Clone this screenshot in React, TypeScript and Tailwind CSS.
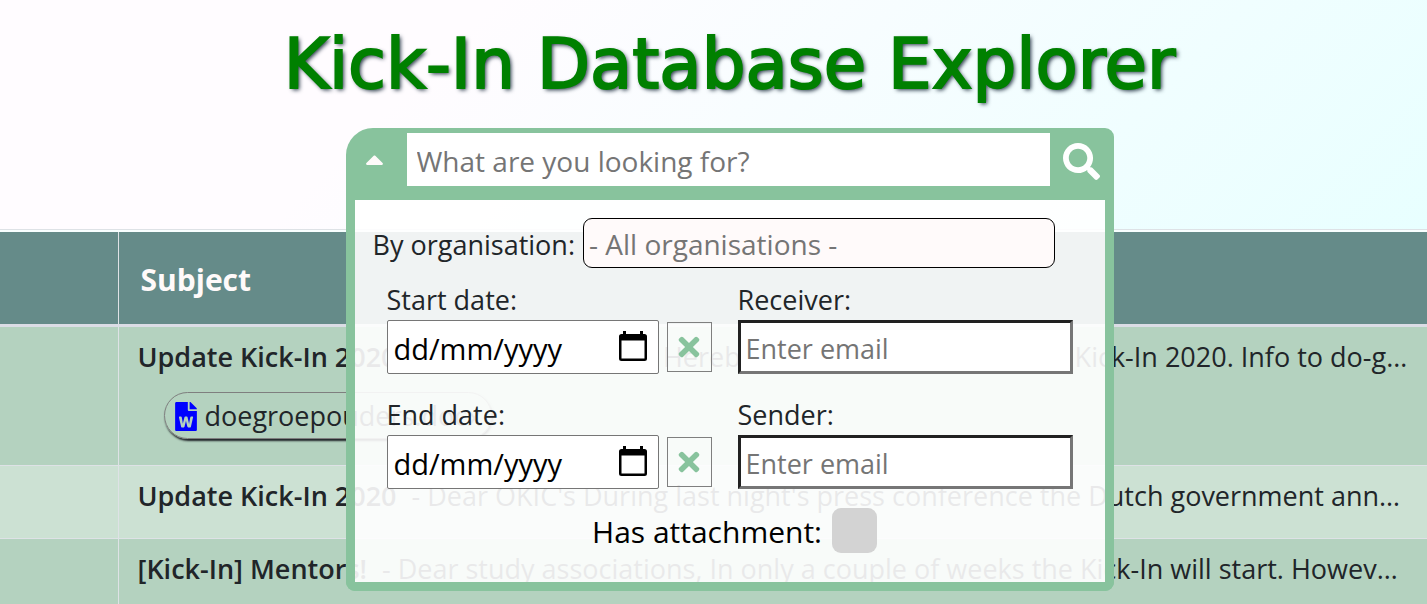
import { useState } from "react";
import { FaCaretUp, FaSearch, FaTimes, FaFileWord } from "react-icons/fa";

const uiFont = "font-['Segoe_UI','Open_Sans',sans-serif]";

type Mail = { subject: string; preview: string; attachment?: string };

const mails: Mail[] = [
  {
    subject: "Update Kick-In 2020",
    preview:
      "Dear associations, Hereby a brief update about the Kick-In 2020. Info to do-group parents",
    attachment: "doegroepouders.docx",
  },
  {
    subject: "Update Kick-In 2020",
    preview:
      "Dear OKIC's During last night's press conference the Dutch government announced new measures",
  },
  {
    subject: "[Kick-In] Mentors!",
    preview:
      "Dear study associations, In only a couple of weeks the Kick-In will start. However, we still need mentors",
  },
];

function CalendarIcon() {
  return (
    <svg viewBox="0 0 28 30" className="h-[30px] w-7" aria-hidden="true">
      <path
        fill="currentColor"
        fillRule="evenodd"
        d="M4 0h3v3h14V0h3v3h1.500a2.500 2.500 0 0 1 2.500 2.500v22a2.500 2.500 0 0 1-2.500 2.500h-23A2.500 2.500 0 0 1 0 27.500v-22A2.500 2.500 0 0 1 2.500 3H4zM2.500 9.500V27.500h23V9.500z"
      />
    </svg>
  );
}

function DateField({ id, label }: { id: string; label: string }) {
  const [value, setValue] = useState("");
  return (
    <div>
      <label htmlFor={id} className="block h-10 leading-10">
        {label}
      </label>
      <div className="flex items-center gap-2">
        <div className="flex h-[54px] min-w-0 flex-1 items-center rounded-[2px] border border-[#767676] bg-white pr-[11px] pl-1.5 text-black">
          <input
            id={id}
            type="text"
            placeholder="dd/mm/yyyy"
            value={value}
            onChange={(e) => setValue(e.target.value)}
            className="min-w-0 flex-1 bg-transparent pt-1 text-[29px] outline-none placeholder:text-black"
          />
          <button type="button" aria-label={`Pick ${label}`} className="-mt-0.5">
            <CalendarIcon />
          </button>
        </div>
        <button
          type="button"
          aria-label={`Clear ${label}`}
          onClick={() => setValue("")}
          className="flex h-[50px] w-[45px] items-center justify-center border border-[#7f7f7f] text-[#88c39d]"
        >
          <FaTimes className="size-[30px]" />
        </button>
      </div>
    </div>
  );
}

function EmailField({ id, label }: { id: string; label: string }) {
  return (
    <div>
      <label htmlFor={id} className="block h-10 leading-10">
        {label}
      </label>
      <input
        id={id}
        type="email"
        placeholder="Enter email"
        className="h-[54px] w-full border-[3px] border-t-[#212121] border-r-[#767676] border-b-[#767676] border-l-[#212121] bg-white px-[5px] pt-0.5 placeholder:text-[#757575]"
      />
    </div>
  );
}

function SearchPanel() {
  return (
    <div className="absolute inset-x-0 top-full z-10 rounded-b-[9px] border-[9px] border-t-0 border-[#88c39d] bg-white/90 bg-clip-padding px-[18px] pt-[18px] pb-[29px] text-[27px]">
      <div className="flex items-center gap-2">
        <label htmlFor="organisation" className="shrink-0 pt-1">
          By organisation:
        </label>
        <input
          id="organisation"
          type="text"
          placeholder="- All organisations -"
          className="mr-8 h-[50px] min-w-0 flex-1 rounded-[9px] border border-black bg-[#fffafa] px-[5px] pt-0.5 text-[28px] placeholder:text-[#757575]"
        />
      </div>
      <div className="mt-3 mr-[14px] ml-[14px] grid grid-cols-[325px_1fr] gap-x-[26px] gap-y-[21px]">
        <DateField id="start" label="Start date:" />
        <EmailField id="receiver" label="Receiver:" />
        <DateField id="end" label="End date:" />
        <EmailField id="sender" label="Sender:" />
      </div>
      <div className="mt-[19px] flex h-[45px] items-center justify-center gap-2.5 pl-2.5 text-[30px] text-black">
        <label htmlFor="attachment" className="pt-0.5">
          Has attachment:
        </label>
        <input
          id="attachment"
          type="checkbox"
          className="size-[45px] appearance-none rounded-[9px] bg-[#d3d3d3] checked:bg-[#88c39d]"
        />
      </div>
    </div>
  );
}

export default function App() {
  const [open, setOpen] = useState(true);
  return (
    <main
      className={`min-h-screen overflow-hidden text-[27px] text-[#212529] ${uiFont}`}
    >
      <header className="h-[229px] bg-linear-[135deg,#fffcff_30%,#e8ffff] pl-8">
        <h1 className="h-32 text-center font-['Comic_Sans_MS','DejaVu_Sans',sans-serif] text-[69px] leading-[128px] whitespace-nowrap text-[#008000] [text-shadow:2px_2px_4px_#1f3040] [-webkit-text-stroke:2px_#008000]">
          Kick-In Database Explorer
        </h1>
        <form
          className="relative mx-auto h-[72px] max-w-3xl"
          onSubmit={(e) => e.preventDefault()}
        >
          <div className="flex h-full rounded-tl-[27px] rounded-tr-[9px] bg-[#88c39d] pt-[5px] pb-3.5 text-[#fffafa]">
            <button
              type="button"
              aria-label="Toggle filters"
              onClick={() => setOpen(!open)}
              className="flex w-[61px] items-center justify-center pr-1"
            >
              <FaCaretUp className="size-[29px]" />
            </button>
            <input
              type="search"
              aria-label="Search"
              placeholder="What are you looking for?"
              className="min-w-0 flex-1 bg-white px-2.5 pt-0.5 text-[28px] text-[#212529] placeholder:text-[#757575]"
            />
            <button
              type="submit"
              aria-label="Search"
              className="flex w-16 items-center justify-center pt-1 text-white"
            >
              <FaSearch className="size-[37px]" />
            </button>
          </div>
          {open && <SearchPanel />}
        </form>
      </header>
      <div className="border-t border-[#dee2e6] bg-[#f8ffff] pt-0.5">
        <table className="w-full table-fixed border-collapse">
          <thead>
            <tr className="h-[93px] border-b-[3px] border-[#dbdde5] bg-[#658b89] text-left text-[30px] text-[#fffafa]">
              <th className="w-[118px]" aria-label="Date" />
              <th className="border-l border-l-[#dee2e6] px-[22px] pt-1 font-bold">
                Subject
              </th>
            </tr>
          </thead>
          <tbody>
            {mails.map((mail, i) => (
              <tr
                key={i}
                className="h-[73px] border-b border-[#dee2e6] align-top odd:bg-[#b4d2bf] even:bg-[#cce1d3]"
              >
                <td />
                <td className="border-l border-[#dee2e6] pr-[18px] pl-[19px]">
                  <div className="truncate pt-[5px] leading-[50px]">
                    <span className="mr-2 font-semibold">{mail.subject}</span>{" "}
                    - {mail.preview}
                  </div>
                  {mail.attachment && (
                    <a
                      href="#attachment"
                      className="mt-2.5 mb-[26px] ml-[26px] inline-flex h-[47px] items-center gap-2 rounded-full border border-[#7f7f7f] pt-0.5 pr-2.5 pl-2.5 align-top shadow-[1px_2px_2px_#212529]"
                    >
                      <FaFileWord className="h-[29px] w-[22px] text-[#0000ff]" />
                      <span>{mail.attachment}</span>
                    </a>
                  )}
                </td>
              </tr>
            ))}
          </tbody>
        </table>
      </div>
    </main>
  );
}
